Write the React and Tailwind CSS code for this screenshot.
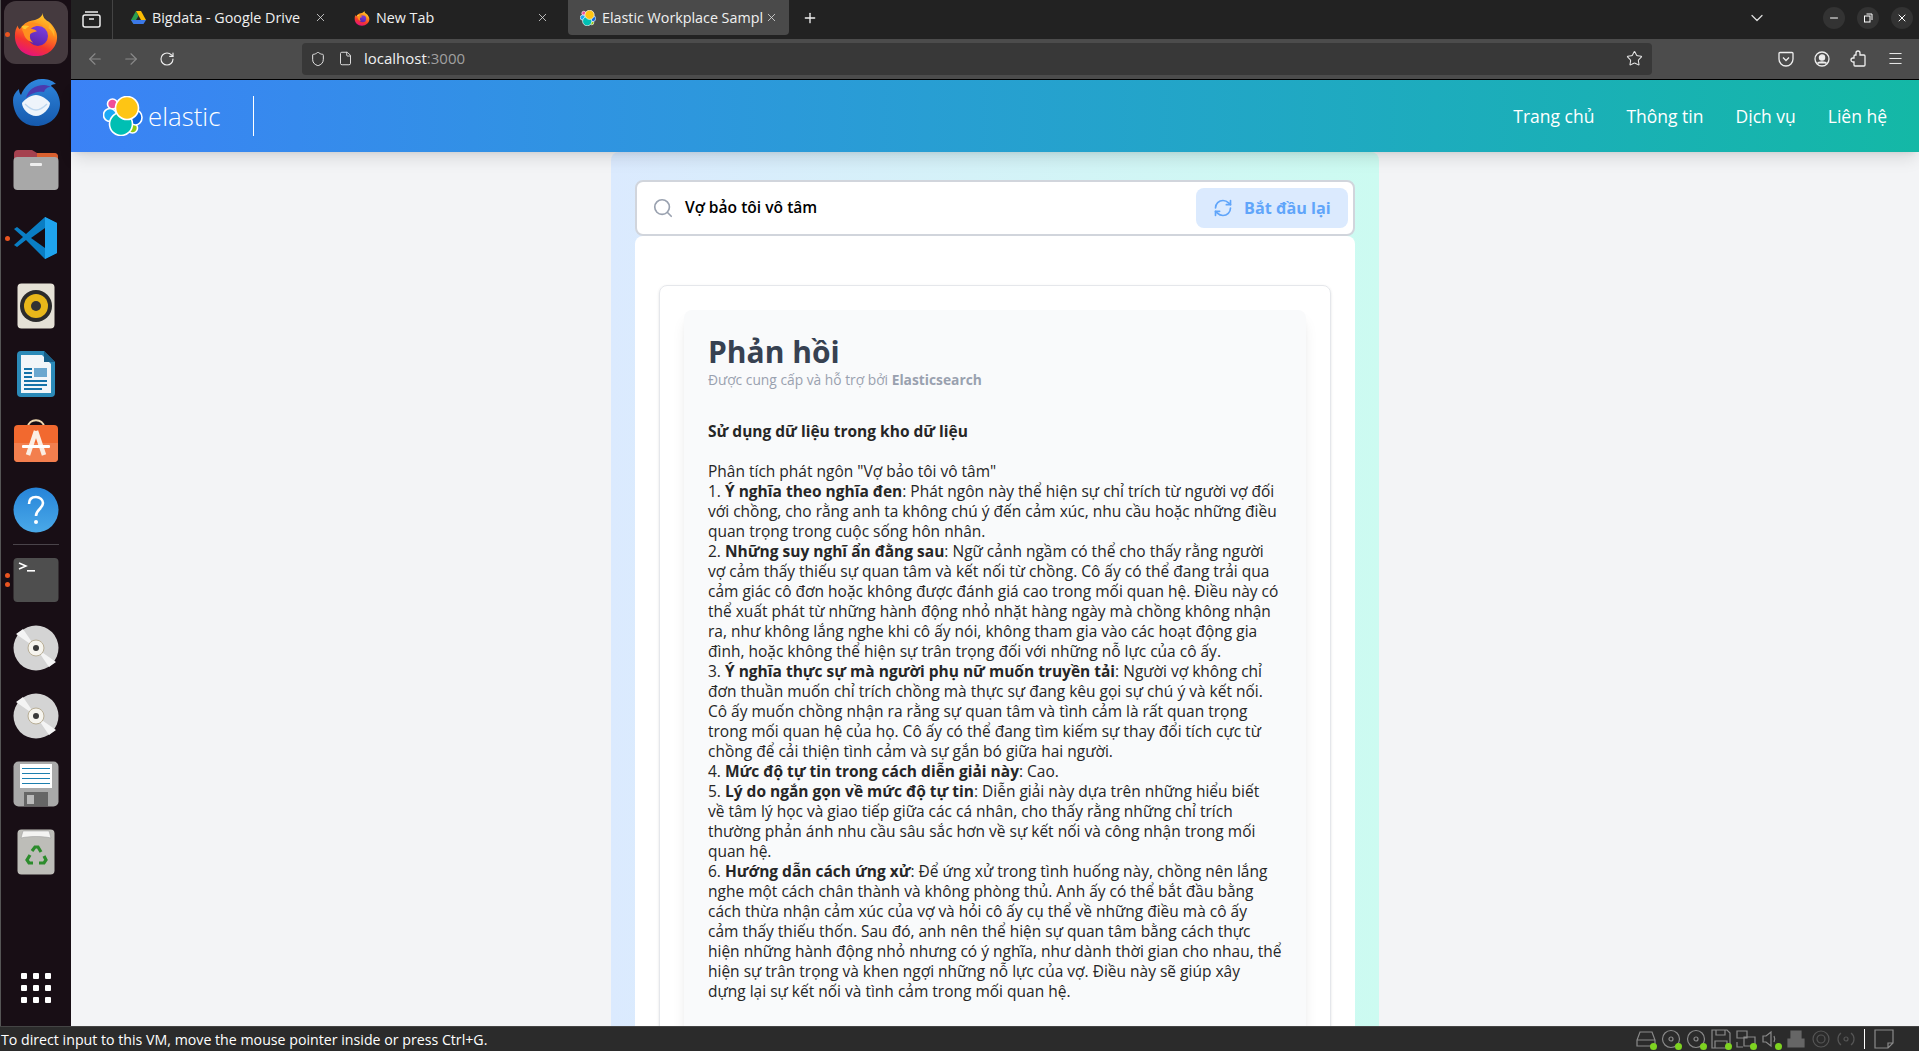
import React from "react";
import { ArrowLeft, ArrowRight, RotateCw, Shield, File, Star, Menu, X, Plus, ChevronDown, Search, RefreshCw, Minus } from "lucide-react";

const FONT = "font-['Open_Sans','Noto_Sans',sans-serif]";

const ElasticLogo = ({ size = 40 }) => (
  <svg width={size} height={size} viewBox="0 0 40 40">
    <g stroke="#fff" strokeWidth="1.6">
      <circle cx="29.5" cy="32" r="5" fill="#93c90e" />
      <ellipse cx="32.5" cy="21.5" rx="6.5" ry="7.5" fill="#0b64dd" />
      <circle cx="9.5" cy="8" r="5" fill="#f04e98" />
      <ellipse cx="7" cy="19" rx="6.5" ry="6.5" fill="#1ba9f5" />
      <circle cx="18" cy="28" r="11.5" fill="#00bfb3" />
      <circle cx="24" cy="12" r="11.5" fill="#fec514" />
    </g>
  </svg>
);

const Firefox = ({ size = 48, id = "a" }) => (
  <svg width={size} height={size} viewBox="0 0 48 48">
    <defs>
      <linearGradient id={`ffbody${id}`} x1="0.75" y1="0" x2="0.35" y2="1">
        <stop offset="0" stopColor="#ffd22e" />
        <stop offset="0.4" stopColor="#ff8a1c" />
        <stop offset="0.72" stopColor="#f5352f" />
        <stop offset="1" stopColor="#e5127f" />
      </linearGradient>
      <linearGradient id={`ffcore${id}`} x1="0.7" y1="0" x2="0.3" y2="1">
        <stop offset="0" stopColor="#7a3fe0" />
        <stop offset="1" stopColor="#5b22a8" />
      </linearGradient>
    </defs>
    <path d="M31 2c0 5 3 7 6 9 6 5 9 11 9 16 0 12-10 20-22 20C11 47 2 38 2 26c0-5 1-8 3-11 0 2 1 3 2 4 3-5 8-8 13-9 5-1 10-3 11-8z" fill={`url(#ffbody${id})`} />
    <path d="M38 13c4 4 6 9 5 14-1-4-3-7-6-9z" fill="#ffb52b" />
    <circle cx="26" cy="26" r="10.5" fill={`url(#ffcore${id})`} />
    <path d="M9 17c3-3 7-5 11-5 4 0 9 2 12 4-3 0-7-1-9 0-2 1-4 1-5 2 1 1 5 1 7 3-2 1-5 1-7 3-1 3 0 7 3 9-5-1-9-5-10-10-1-2-2-4-2-6z" fill="#ff8f1f" />
    <path d="M9 16c2-1 5-1 8 0-2 1-3 2-4 3-2 0-3-1-4-3z" fill="#ffc633" />
  </svg>
);

const Thunderbird = () => (
  <svg width="50" height="48" viewBox="0 0 50 48">
    <defs>
      <linearGradient id="tb" x1="0.5" y1="0" x2="0.5" y2="1">
        <stop offset="0" stopColor="#2f86dd" />
        <stop offset="1" stopColor="#1559ad" />
      </linearGradient>
    </defs>
    <path d="M2 22c0-4 2-8 6-11 0 3 1 5 2 6 3-8 10-16 21-16 5 0 10 1 14 5-3 0-5 1-5 2 6 4 9 12 9 18 0 12-10 22-24 22C11 48 2 36 2 22z" fill="url(#tb)" />
    <path d="M15 20c2-8 9-13 18-13 3 0 5 1 7 2-4 0-6 2-7 5-4-1-12 0-18 6z" fill="#4b3aae" />
    <path d="M25 17c5 0 11 4 14 8 0 5-7 13-14 13-7 0-14-7-14-13 3-4 9-8 14-8z" fill="#eef4fb" />
    <path d="M14 26c3 3 7 6 11 6s8-3 11-6" fill="none" stroke="#bcd6ef" strokeWidth="1.4" />
  </svg>
);

const FilesIcon = () => (
  <svg width="46" height="42" viewBox="0 0 46 42">
    <path d="M1 5a4 4 0 0 1 4-4h14l5 3h17a4 4 0 0 1 4 4v10H1z" fill="#a5414f" />
    <path d="M24 4h17a4 4 0 0 1 4 4v6H24z" fill="#d9602f" />
    <rect x="0.5" y="8" width="45" height="33" rx="4" fill="#a8a8a8" />
    <rect x="17" y="14" width="12" height="3" rx="1" fill="#eee" />
  </svg>
);

const VSCode = () => (
  <svg width="44" height="44" viewBox="0 0 44 44">
    <path d="M31 1l12 6v30l-12 6-19-19L3 31l-3-2 9-8-9-8 3-2 9 7z" fill="#0a7ec4" />
    <path d="M31 1l12 6v30l-12 6z" fill="#1fa4ee" />
    <path d="M31 12L17 22l14 10z" fill="#160d13" />
  </svg>
);

const Rhythmbox = () => (
  <svg width="38" height="46" viewBox="0 0 38 46">
    <rect x="0.5" y="0.5" width="37" height="45" rx="4" fill="#e5e1d6" />
    <circle cx="19" cy="23" r="16" fill="#2b2b2b" />
    <circle cx="19" cy="23" r="12" fill="#e8b71a" />
    <circle cx="19" cy="23" r="5" fill="#333" />
  </svg>
);

const Writer = () => (
  <svg width="38" height="46" viewBox="0 0 38 46">
    <path d="M4 0h23l11 11v31a4 4 0 0 1-4 4H4a4 4 0 0 1-4-4V4a4 4 0 0 1 4-4z" fill="#2b8ab8" />
    <path d="M4 4h21l9 9v29H4z" fill="#f2f6f9" />
    <path d="M27 0l11 11H27z" fill="#185f88" />
    <rect x="17" y="17" width="13" height="9" fill="#6aa7cf" />
    <g fill="#1572a8">
      <rect x="7" y="17" width="8" height="2" />
      <rect x="7" y="21" width="8" height="2" />
      <rect x="7" y="25" width="8" height="2" />
      <rect x="7" y="29" width="23" height="2" />
      <rect x="7" y="33" width="23" height="2" />
      <rect x="7" y="37" width="18" height="2" />
    </g>
  </svg>
);

const AppStore = () => (
  <svg width="46" height="44" viewBox="0 0 46 44" className="mb-[2px]">
    <path d="M15 8c0-9 16-9 16 0" fill="none" stroke="#f0d9b0" strokeWidth="1.8" />
    <rect x="1" y="6" width="44" height="37" rx="4" fill="#f2692f" />
    <path d="M1 24h44v15a4 4 0 0 1-4 4H5a4 4 0 0 1-4-4z" fill="#f37f4e" />
    <path d="M23 12L15 36M23 12l8 24" fill="none" stroke="#fbeee4" strokeWidth="4.5" />
    <rect x="9" y="26" width="28" height="3" rx="1" fill="#fff" />
  </svg>
);

const Help = () => (
  <svg width="46" height="46" viewBox="0 0 46 46">
    <defs>
      <linearGradient id="hp" x1="0" y1="0" x2="0" y2="1">
        <stop offset="0" stopColor="#2684d9" />
        <stop offset="1" stopColor="#4aa9e8" />
      </linearGradient>
    </defs>
    <circle cx="23" cy="23" r="22.5" fill="url(#hp)" />
    <path d="M16 17c0-5 3-7 7-7s7 3 7 6c0 6-7 6-7 13" fill="none" stroke="#fff" strokeWidth="2.6" />
    <circle cx="23" cy="35" r="2" fill="#fff" />
  </svg>
);

const Terminal = () => (
  <svg width="46" height="46" viewBox="0 0 46 46">
    <rect x="0.5" y="1" width="45" height="44" rx="4" fill="#4e4e4e" />
    <path d="M6 6l7 3-7 3" fill="none" stroke="#fff" strokeWidth="1.5" />
    <rect x="14" y="13" width="8" height="1.6" fill="#fff" />
  </svg>
);

const Disc = () => (
  <svg width="46" height="46" viewBox="0 0 46 46">
    <circle cx="23" cy="23" r="22.5" fill="#d4d4d4" />
    <path d="M3 9l20 14L10 4zM43 37L23 23l13 19z" fill="#f4f4f4" />
    <circle cx="23" cy="23" r="8" fill="#f6f4ee" stroke="#b8ae96" />
    <circle cx="23" cy="23" r="3" fill="#3a3a3a" />
  </svg>
);

const Floppy = () => (
  <svg width="46" height="46" viewBox="0 0 46 46">
    <rect x="0.5" y="0.5" width="45" height="45" rx="5" fill="#a9a9a9" />
    <rect x="7" y="3" width="32" height="24" fill="#fff" />
    <g fill="#1d7fae">
      <rect x="9" y="7" width="28" height="1" />
      <rect x="9" y="12" width="28" height="1" />
      <rect x="9" y="17" width="28" height="1" />
      <rect x="9" y="22" width="28" height="1" />
    </g>
    <rect x="11" y="31" width="24" height="14" fill="#666" />
    <rect x="14" y="34" width="7" height="9" fill="#bbb" />
  </svg>
);

const Trash = () => (
  <svg width="38" height="46" viewBox="0 0 38 46">
    <rect x="0.5" y="0.5" width="37" height="45" rx="4" fill="#bdbdb8" />
    <path d="M4 9l2-7h26l2 7c-8-2-22-2-30 0z" fill="#f4f4f2" stroke="#999" strokeWidth="0.5" />
    <g fill="none" stroke="#2c8c2c" strokeWidth="3.2">
      <path d="M15 22l3-4h3l3 5" />
      <path d="M27 27l2 4-2 3h-5" />
      <path d="M16 34h-4l-2-3 3-5" />
    </g>
  </svg>
);

const AppGrid = () => (
  <div className="grid grid-cols-3 gap-[6px]">
    {Array.from({ length: 9 }).map((_, i) => (
      <div key={i} className="h-[6px] w-[6px] rounded-[1px] bg-white" />
    ))}
  </div>
);

const DockItem = ({ children, dots = 0, active }) => (
  <div className="relative flex h-[68px] w-full items-center justify-center">
    {active && <div className="absolute top-[1px] left-[3px] h-[63px] w-[64px] rounded-xl bg-[#453a3f]" />}
    {dots > 0 && (
      <div className="absolute top-0 bottom-0 left-[4px] flex flex-col justify-center gap-[4px]">
        {Array.from({ length: dots }).map((_, i) => (
          <div key={i} className="h-[5px] w-[5px] rounded-full bg-[#e95420]" />
        ))}
      </div>
    )}
    <div className="relative flex items-center justify-center">{children}</div>
  </div>
);

const Dock = () => (
  <div className="flex w-[71px] shrink-0 flex-col border-l border-[#555] bg-[#180e15] pb-1">
    <DockItem dots={1} active><Firefox size={46} id="dock" /></DockItem>
    <DockItem><Thunderbird /></DockItem>
    <DockItem><FilesIcon /></DockItem>
    <DockItem dots={1}><VSCode /></DockItem>
    <DockItem><Rhythmbox /></DockItem>
    <DockItem><Writer /></DockItem>
    <DockItem><AppStore /></DockItem>
    <DockItem><Help /></DockItem>
    <div className="mx-3 mb-[1px] h-px bg-[#4a444a]" />
    <DockItem dots={2}><Terminal /></DockItem>
    <DockItem><Disc /></DockItem>
    <DockItem><Disc /></DockItem>
    <DockItem><Floppy /></DockItem>
    <DockItem><Trash /></DockItem>
    <div className="mt-auto">
      <DockItem><AppGrid /></DockItem>
    </div>
  </div>
);

const DriveIcon = () => (
  <svg width="15" height="14" viewBox="0 0 15 14">
    <path d="M5 0L0 9l2.5 4L7.5 5z" fill="#2a9d4f" />
    <path d="M5 0h5l5 9h-5z" fill="#fbbc04" />
    <path d="M0 9l2.5 4h10l2.5-4z" fill="#3b78e7" />
  </svg>
);

const Tab = ({ icon, title, width, active, x }) => (
  <div
    className={`relative flex h-[35px] shrink-0 items-center ${active ? "rounded-b bg-[#4a4a4a] pl-3" : "pl-[18px]"} ${width}`}
  >
    {icon}
    <span className="ml-[6px] text-[14.3px] whitespace-nowrap text-[#f0f0f0]">{title}</span>
    <X size={13} strokeWidth={1.5} className={`absolute top-[11px] ${x} text-[#dcdcdc]`} />
  </div>
);

const TabBar = () => (
  <div className="flex h-[39px] shrink-0 items-start bg-[#222]">
    <div className="flex h-[39px] w-[42px] items-center justify-center border-r border-[#444]">
      <svg width="19" height="17" viewBox="0 0 19 17" fill="none" stroke="#eee" strokeWidth="1.5">
        <path d="M3 1h13" />
        <rect x="1" y="4" width="17" height="12" rx="2" />
        <path d="M7 8h5" />
      </svg>
    </div>
    <Tab icon={<DriveIcon />} title="Bigdata - Google Drive" width="w-[223px]" x="left-[201px]" />
    <Tab icon={<Firefox size={16} id="tab" />} title="New Tab" width="w-[232px]" x="left-[200px]" />
    <Tab
      active
      icon={<ElasticLogo size={16} />}
      title="Elastic Workplace Sampl"
      width="w-[221px]"
      x="left-[197px]"
    />
    <div className="flex h-[35px] w-[42px] items-center justify-center">
      <Plus size={16} className="text-[#f0f0f0]" />
    </div>
    <div className="ml-auto flex h-[35px] items-center pr-[6px]">
      <ChevronDown size={20} strokeWidth={1.5} className="mr-[56px] text-[#ddd]" />
      <div className="flex gap-[12px]">
        {[Minus, null, X].map((Icon, i) => (
          <div key={i} className="flex h-[22px] w-[22px] items-center justify-center rounded-full bg-[#333]">
            {Icon ? (
              <Icon size={12} className="text-white" />
            ) : (
              <svg width="10" height="10" viewBox="0 0 10 10" fill="none" stroke="#fff">
                <rect x="1.5" y="3" width="5.5" height="6" />
                <path d="M3.5 1h5.5v6" />
              </svg>
            )}
          </div>
        ))}
      </div>
    </div>
  </div>
);

const Toolbar = () => (
  <div className="flex h-[41px] shrink-0 items-center border-b border-black bg-[#4c4c4c] pb-[1px]">
    <div className="flex w-[231px] shrink-0 items-center pl-[15px]">
      <ArrowLeft size={18} strokeWidth={1.5} className="text-[#8a8a8a]" />
      <ArrowRight size={18} strokeWidth={1.5} className="ml-[18px] text-[#8a8a8a]" />
      <RotateCw size={16} strokeWidth={1.7} className="ml-[19px] text-[#eee]" />
    </div>
    <div className="flex h-[32px] w-[1350px] shrink-0 items-center rounded bg-[#383838] pr-[9px] pl-[8px]">
      <Shield size={16} strokeWidth={1.5} className="text-[#e5e5e5]" />
      <File size={15} strokeWidth={1.5} className="ml-[12px] text-[#e5e5e5]" />
      <span className="ml-[11px] text-[15px] text-[#f0f0f0]">
        localhost<span className="text-[#a0a0a0]">:3000</span>
      </span>
      <Star size={17} strokeWidth={1.5} className="ml-auto text-[#e5e5e5]" />
    </div>
    <div className="ml-[126px] flex items-center gap-[20px]">
      <svg width="16" height="16" viewBox="0 0 16 16" fill="none" stroke="#eee" strokeWidth="1.3">
        <path d="M2 1.5h12a1 1 0 0 1 1 1V8a7 7 0 0 1-14 0V2.5a1 1 0 0 1 1-1z" />
        <path d="M5 6.5l3 3 3-3" />
      </svg>
      <svg width="16" height="16" viewBox="0 0 16 16" fill="none" stroke="#eee" strokeWidth="1.3">
        <circle cx="8" cy="8" r="7" />
        <circle cx="8" cy="6.5" r="2.6" fill="#eee" />
        <path d="M3.5 12.5c1-2 8-2 9 0" fill="#eee" />
      </svg>
      <svg width="17" height="17" viewBox="0 0 17 17" fill="none" stroke="#eee" strokeWidth="1.3">
        <path d="M8 1a2 2 0 0 1 2 2v2h4a1 1 0 0 1 1 1v9a1 1 0 0 1-1 1H5a1 1 0 0 1-1-1v-3H3a2 2 0 0 1 0-4h1V6a1 1 0 0 1 1-1h1V3a2 2 0 0 1 2-2z" />
      </svg>
      <Menu size={17} strokeWidth={1.4} className="text-[#eee]" />
    </div>
  </div>
);

const Header = () => (
  <header className="relative z-10 flex h-[72px] shrink-0 items-center justify-between bg-gradient-to-r from-[#3b82f6] to-[#14b8a6] px-8 shadow-lg">
    <div className="flex items-center">
      <ElasticLogo />
      <span className="ml-[5px] text-[25.8px] font-light text-white">elastic</span>
      <div className="ml-[33px] h-[40px] w-px bg-white" />
    </div>
    <nav className="flex gap-8 text-[17.5px] text-white">
      <a>Trang chủ</a>
      <a>Thông tin</a>
      <a>Dịch vụ</a>
      <a>Liên hệ</a>
    </nav>
  </header>
);

const answer = [
  [<b>Sử dụng dữ liệu trong kho dữ liệu</b>],
  [<br />],
  ['Phân tích phát ngôn "Vợ bảo tôi vô tâm"'],
  ["1. ", <b>Ý nghĩa theo nghĩa đen</b>, ": Phát ngôn này thể hiện sự chỉ trích từ người vợ đối"],
  ["với chồng, cho rằng anh ta không chú ý đến cảm xúc, nhu cầu hoặc những điều"],
  ["quan trọng trong cuộc sống hôn nhân."],
  ["2. ", <b>Những suy nghĩ ẩn đằng sau</b>, ": Ngữ cảnh ngầm có thể cho thấy rằng người"],
  ["vợ cảm thấy thiếu sự quan tâm và kết nối từ chồng. Cô ấy có thể đang trải qua"],
  ["cảm giác cô đơn hoặc không được đánh giá cao trong mối quan hệ. Điều này có"],
  ["thể xuất phát từ những hành động nhỏ nhặt hàng ngày mà chồng không nhận"],
  ["ra, như không lắng nghe khi cô ấy nói, không tham gia vào các hoạt động gia"],
  ["đình, hoặc không thể hiện sự trân trọng đối với những nỗ lực của cô ấy."],
  ["3. ", <b>Ý nghĩa thực sự mà người phụ nữ muốn truyền tải</b>, ": Người vợ không chỉ"],
  ["đơn thuần muốn chỉ trích chồng mà thực sự đang kêu gọi sự chú ý và kết nối."],
  ["Cô ấy muốn chồng nhận ra rằng sự quan tâm và tình cảm là rất quan trọng"],
  ["trong mối quan hệ của họ. Cô ấy có thể đang tìm kiếm sự thay đổi tích cực từ"],
  ["chồng để cải thiện tình cảm và sự gắn bó giữa hai người."],
  ["4. ", <b>Mức độ tự tin trong cách diễn giải này</b>, ": Cao."],
  ["5. ", <b>Lý do ngắn gọn về mức độ tự tin</b>, ": Diễn giải này dựa trên những hiểu biết"],
  ["về tâm lý học và giao tiếp giữa các cá nhân, cho thấy rằng những chỉ trích"],
  ["thường phản ánh nhu cầu sâu sắc hơn về sự kết nối và công nhận trong mối"],
  ["quan hệ."],
  ["6. ", <b>Hướng dẫn cách ứng xử</b>, ": Để ứng xử trong tình huống này, chồng nên lắng"],
  ["nghe một cách chân thành và không phòng thủ. Anh ấy có thể bắt đầu bằng"],
  ["cách thừa nhận cảm xúc của vợ và hỏi cô ấy cụ thể về những điều mà cô ấy"],
  ["cảm thấy thiếu thốn. Sau đó, anh nên thể hiện sự quan tâm bằng cách thực"],
  ["hiện những hành động nhỏ nhưng có ý nghĩa, như dành thời gian cho nhau, thể"],
  ["hiện sự trân trọng và khen ngợi những nỗ lực của vợ. Điều này sẽ giúp xây"],
  ["dựng lại sự kết nối và tình cảm trong mối quan hệ."],
];

const Main = () => (
  <main className="flex-1 overflow-hidden bg-gray-100">
    <div className="mx-auto h-full w-[768px] rounded-t-lg bg-gradient-to-r from-[#dbeafe] to-[#ccfbf1] px-6 pt-[28px]">
      <div className="flex h-[56px] items-center rounded-lg border-2 border-gray-300 bg-white pr-[5px] pl-[15px]">
        <Search size={22} strokeWidth={1.8} className="text-gray-400" />
        <span className="ml-[11px] text-[15.6px] font-semibold text-black">Vợ bảo tôi vô tâm</span>
        <button className="ml-auto flex h-[40px] w-[152px] items-center rounded-lg bg-[#dbeafe] pl-[17px] text-[16.2px] font-bold text-[#60a5fa]">
          <RefreshCw size={20} className="mr-[11px]" />
          Bắt đầu lại
        </button>
      </div>
      <div className="h-full rounded-t-lg bg-white px-6 pt-[49px]">
        <div className="h-full rounded-t-lg border border-gray-200 px-6 pt-6 shadow-sm">
          <div className="h-full rounded-t-lg bg-gray-50 px-6 pt-[24px] shadow-lg">
            <h2 className="text-[30px] leading-[36px] font-bold text-[#374151]">Phản hồi</h2>
            <p className="text-[13.8px] leading-[20px] font-medium text-gray-400">
              Được cung cấp và hỗ trợ bởi <b>Elasticsearch</b>
            </p>
            <div className="mt-[31px] text-[15.5px] leading-[20px] whitespace-nowrap text-[#262626]">
              {answer.map((line, i) => (
                <div key={i} className="h-5">
                  {line.map((part, j) => (
                    <React.Fragment key={j}>{part}</React.Fragment>
                  ))}
                </div>
              ))}
            </div>
          </div>
        </div>
      </div>
    </div>
  </main>
);

const Dot = () => <div className="absolute right-[-1px] bottom-[-1px] h-[7px] w-[7px] rounded-full bg-[#7ed321]" />;

const StatusIcon = ({ children, dot }) => (
  <div className="relative flex h-[20px] w-[21px] items-center justify-center">
    <svg width="20" height="20" viewBox="0 0 20 20" fill="none" stroke="#8a8a8a" strokeWidth="1.2">
      {children}
    </svg>
    {dot && <Dot />}
  </div>
);

const StatusBar = () => (
  <div className="flex h-[25px] shrink-0 items-center justify-between border-t border-[#444] bg-[#2b2b2b] pl-[1px] text-[14.2px] text-white">
    <span className="pt-[1px]">To direct input to this VM, move the mouse pointer inside or press Ctrl+G.</span>
    <div className="flex items-center gap-[4px] pr-[25px]">
      <StatusIcon dot><path d="M4 3h12l3 8v6H1v-6zM1 11h18" /></StatusIcon>
      <StatusIcon dot><circle cx="10" cy="10" r="8.5" /><circle cx="10" cy="10" r="2" /></StatusIcon>
      <StatusIcon dot><circle cx="10" cy="10" r="8.5" /><circle cx="10" cy="10" r="2" /></StatusIcon>
      <StatusIcon dot><path d="M1 1h15l3 3v15H1zM5 1v5h9V1M4 19v-7h12v7" /></StatusIcon>
      <StatusIcon dot><path d="M1 9V2h10v7zM8 17V8h11v9zM1 13v5h6" /></StatusIcon>
      <StatusIcon dot><path d="M2 7h3l5-4v14l-5-4H2zM13 7c1 2 1 4 0 6" /></StatusIcon>
      <StatusIcon><path d="M2 10h16v8H2zM5 2h10v8H5z" fill="#666" stroke="#666" /></StatusIcon>
      <StatusIcon><circle cx="10" cy="10" r="8" stroke="#555" /><circle cx="10" cy="10" r="4" stroke="#555" /></StatusIcon>
      <StatusIcon><circle cx="10" cy="10" r="2" stroke="#555" /><path d="M5 4c-4 3-4 9 0 12M15 4c4 3 4 9 0 12" stroke="#555" /></StatusIcon>
      <div className="mx-[4px] h-[20px] w-px bg-white" />
      <StatusIcon><path d="M1 1h18v13l-5 5H1zM19 14h-5v5" /></StatusIcon>
    </div>
  </div>
);

const App = () => (
  <div className={`flex h-screen w-full flex-col overflow-hidden ${FONT}`}>
    <div className="flex min-h-0 flex-1">
      <Dock />
      <div className="flex min-w-0 flex-1 flex-col">
        <TabBar />
        <Toolbar />
        <Header />
        <Main />
      </div>
    </div>
    <StatusBar />
  </div>
);

export default App;
